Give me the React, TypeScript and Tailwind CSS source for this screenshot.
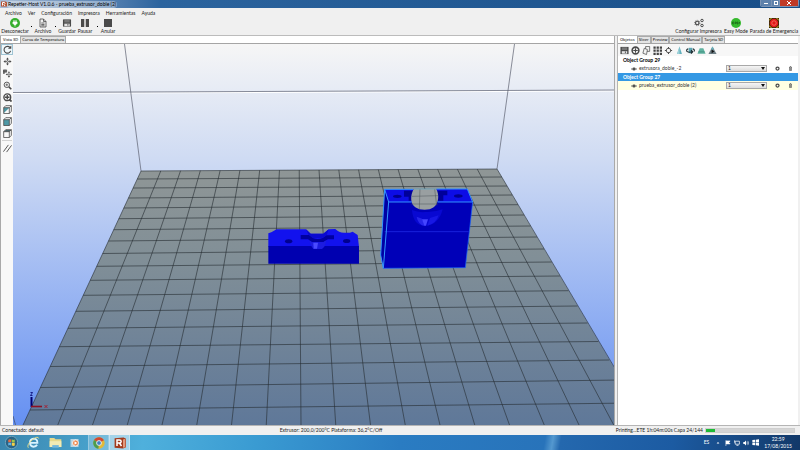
import { useState, type ReactNode } from "react";

const BED_ROWS = [
  [171, 169], [179, 177], [188, 186], [198, 195], [208, 204.7], [218.7, 215], [229.7, 226], [241, 237], [253.5, 249],
  [266.3, 262], [280.3, 276], [295.3, 290.7], [311.3, 306], [328.3, 323], [346.7, 341.5], [366.5, 360], [387.5, 380], [410, 403],
];

const bedLeft = (y: number) => 141 - (y - 171) * 0.4646;
const bedRight = (y: number) => 497 + (y - 169) * 0.588;

function Bed() {
  return (
    <g>
      <path d="M141 171 L497 169 L648 425 L23 425Z" fill="url(#bed)" />
      <g stroke="#252b31" strokeWidth=".6" fill="none">
        {BED_ROWS.map(([l, r]) => (
          <path key={l} d={`M${bedLeft(l)} ${l} L${bedRight(r)} ${r}`} />
        ))}
        {Array.from({ length: 19 }, (_, i) => (
          <path key={i} d={`M${141 + 19.78 * i} ${171 - i * 0.11} L${23 + 34.75 * i} 425`} />
        ))}
      </g>
    </g>
  );
}

function ClampPart() {
  return (
    <g transform="translate(260 180) scale(.3333)">
      <path d="M25 160 L34 157 L50 148 L138 148 L152 161 L190 161 L206 148 L226 147 Q236 158 252 158 L270 158 L278 155 L293 165 L297 200 L25 200Z" fill="#1212ee" />
      <path d="M25 198 H297 V251 H25Z" fill="#0000b0" />
      <path d="M138 148 L152 161 H190 L206 148 L200 166 L186 174 H160 L146 166Z" fill="#0a0ad0" />
      <path d="M122 165 H146 L160 175 Q175 179 188 174 L200 166 H222 V178 H204 L190 186 H156 L144 178 H122Z" fill="#0000a0" />
      <path d="M148 182 L156 187 H190 L200 180 L193 200 L186 207 H160 L154 198Z" fill="#1c1ce0" />
      <path d="M160 188 H174 L171 206 H161Z" fill="#4a4aff" />
      <ellipse cx="86" cy="184" rx="11" ry="6" fill="#000090" />
      <ellipse cx="260" cy="183" rx="11" ry="6" fill="#000090" />
    </g>
  );
}

function BodyPart() {
  return (
    <g transform="translate(260 180) scale(.3333)">
      <path d="M374 28 L388 66 L370 265 L362 225Z" fill="#0000a4" />
      <path d="M374 28 L622 27 L638 66 L386 66Z" fill="#0d0de6" />
      <path d="M386 66 H638 L616 263 L370 265Z" fill="#0000b8" />
      <path d="M432 32 H460 V62 H446 V50 H432Z M526 32 H562 V46 H550 V62 H526Z" fill="#00009a" />
      <path d="M456 90 Q460 137 495 138 Q536 136 548 88 Q520 98 495 96 Q475 98 456 90Z" fill="#0808d2" />
      <path d="M470 110 L486 116 L494 138 Q474 134 470 110Z" fill="#2626ea" />
      <path d="M486 118 H504 L498 137 H493Z" fill="#4545ff" />
      <path d="M510 114 L536 106 Q528 132 502 137Z" fill="#1717e4" />
      <path d="M461 27 C450 48 451 72 466 82 C480 92 508 92 521 82 C536 70 539 46 529 27Z" fill="#999fa1" />
      <path d="M456 49 L534 47 M454 72 H533 M480 27 L478 88 M530 76 L524 27" stroke="#4c555c" strokeWidth="1.5" fill="none" />
      <path d="M461 27 H529" stroke="#62a8c4" strokeWidth="2" />
      <ellipse cx="412" cy="49" rx="13" ry="5" fill="#000090" />
      <ellipse cx="595" cy="48" rx="13" ry="5" fill="#000090" />
      <path d="M374 155 H626" stroke="#2430ee" strokeWidth="2" />
      <g fill="none" stroke="#3296ff" strokeWidth="3">
        <path d="M459 28 H374 L362 225 L370 265 L386 66 H455 M374 28 L386 66 M533 66 H638 L622 27 H530" />
        <path d="M638 66 L616 263 L370 265" strokeWidth="2" stroke="#1666ff" />
      </g>
    </g>
  );
}

function Scene() {
  return (
    <svg className="h-full min-w-0 flex-1" viewBox="13 44 601 381" preserveAspectRatio="xMidYMid slice" role="img" aria-label="Vista 3D">
      <defs>
        <linearGradient id="sky" x2="0" y2="1">
          <stop offset="0" stopColor="#f6f6f6" />
          <stop offset=".3" stopColor="#cfdbf3" />
          <stop offset="1" stopColor="#6590f2" />
        </linearGradient>
        <linearGradient id="bed" x2="0" y2="1">
          <stop offset="0" stopColor="#8f9696" />
          <stop offset=".35" stopColor="#818f97" />
          <stop offset="1" stopColor="#5f7899" />
        </linearGradient>
      </defs>
      <path d="M13 44 H614 V425 H13Z" fill="url(#sky)" />
      <path d="M13 93.5 L614 91" stroke="#fff" />
      <path d="M13 92.5 L614 90 M124.5 44 L141 171 M514.5 44 L497 169" stroke="#5c6070" strokeWidth=".7" />
      <path d="M13 416 L15.5 425" stroke="#35404c" strokeWidth=".6" />
      <Bed />
      <ClampPart />
      <BodyPart />
      <path d="M31.5 407 V397" stroke="#000070" strokeWidth="2" />
      <path d="M31 406.5 H42" stroke="#8e1022" strokeWidth="1.6" />
      <path d="M30.5 392.5 H32.5 L30.5 395.5 H32.5" stroke="#000070" strokeWidth=".8" fill="none" />
      <path d="M44.5 405 L47.5 408 M47.5 405 L44.5 408" stroke="#b01020" strokeWidth=".8" />
    </svg>
  );
}

function Icon({ children, className = "size-[10px]" }: { children: ReactNode; className?: string }) {
  return (
    <svg viewBox="0 0 20 20" className={`shrink-0 ${className}`} fill="none" stroke="#4a4a4a" strokeWidth="2" aria-hidden="true">
      {children}
    </svg>
  );
}

const moveArrows = (
  <>
    <path d="M10 4V16M4 10H16" />
    <path d="M10 0L13.5 5H6.5ZM10 20L13.5 15H6.5ZM0 10L5 6.5V13.5ZM20 10L15 6.5V13.5Z" fill="#4a4a4a" stroke="none" />
    <path d="M8 8H12V12H8Z" fill="#eee" strokeWidth="1" />
  </>
);

const cubeFrame = <path d="M1.5 6H14V19H1.5ZM1.5 6L6 1.5H18.5L14 6M18.5 1.5V14L14 19" strokeWidth="1.8" />;

const VIEW_TOOLS: { name: string; icon: ReactNode }[] = [
  { name: "Rotar", icon: <><path d="M15.5 5.5A7.5 7.5 0 1 0 17 13" strokeWidth="2.4" /><path d="M18.5 1V8.5H11Z" fill="#4a4a4a" stroke="none" /></> },
  { name: "Mover vista", icon: <g transform="translate(1 1) scale(.9)">{moveArrows}</g> },
  { name: "Mover objeto", icon: <><g transform="translate(6 5) scale(.72)">{moveArrows}</g><path d="M1 2H8V7H3V10H1ZM0 5H5" strokeWidth="1.6" fill="#777" /></> },
  { name: "Zoom", icon: <><circle cx="8.5" cy="8.5" r="6" /><path d="M13 13L18.5 18.5" strokeWidth="3.4" /><path d="M5.5 8.5H11.5M8.5 5.5V11.5" strokeWidth="1.6" /></> },
  { name: "Ajustar vista", icon: <><circle cx="9.5" cy="9.5" r="7.5" strokeWidth="3.2" /><path d="M14 14L19 19" strokeWidth="4" /><path d="M9.5 4.5V14.5M4.5 9.5H14.5" strokeWidth="3" /></> },
  { name: "Vista isométrica", icon: <><path d="M2 6H14L2 18Z" fill="#4f99a6" stroke="none" />{cubeFrame}</> },
  { name: "Vista frontal", icon: <><path d="M2 6H14V19H2Z" fill="#4f99a6" stroke="none" />{cubeFrame}</> },
  { name: "Vista superior", icon: <><path d="M2 6L6 2H18L14 6Z" fill="#4f6a70" stroke="none" />{cubeFrame}</> },
];

const floppy = (
  <>
    <path d="M1 2H19V18H1Z" fill="#4a4a4a" stroke="none" />
    <path d="M4 3H16V9H4Z" fill="#777" stroke="none" />
    <path d="M4 11.5H16V17H4Z" fill="#e4e4e4" stroke="none" />
    <path d="M12 12V16" />
  </>
);

const OBJECT_TOOLS: { name: string; icon: ReactNode }[] = [
  { name: "Guardar", icon: floppy },
  { name: "Añadir", icon: <><circle cx="10" cy="10" r="7.5" strokeWidth="3.5" /><path d="M10 5V15M5 10H15" strokeWidth="2.5" /></> },
  { name: "Copiar", icon: <><path d="M8 1H17V12H8Z" fill="#eee" strokeWidth="1.6" /><path d="M5 5L12 8L10 19L2 16Z" fill="#f4f4f4" strokeWidth="1.6" /></> },
  { name: "Auto posición", icon: <path d="M1 1H6V6H1ZM8 1H13V6H8ZM15 1H20V6H15ZM1 8H6V13H1ZM8 8H13V13H8ZM15 8H20V13H15ZM1 15H6V20H1ZM8 15H13V20H8ZM15 15H20V20H15Z" fill="#444" stroke="none" /> },
  { name: "Centrar", icon: <><circle cx="10" cy="10" r="5" /><path d="M10 2V6M10 14V18M2 10H6M14 10H18" strokeWidth="2.4" /></> },
  { name: "Escalar", icon: <><path d="M10 1L15.5 18H4.5Z" fill="#62b0bd" stroke="none" /><path d="M10 1L10 18H4.5Z" fill="#9dd2da" stroke="none" /></> },
  { name: "Girar", icon: <><path d="M6 4H14V16H6Z" fill="#5aa7b4" stroke="none" /><path d="M5 6Q0 8 2 12Q6 15 14 13M15 6Q20 8 18 12M11 9L15 13L11 17" stroke="#1c2a2e" strokeWidth="2.4" /></> },
  { name: "Cortar", icon: <><path d="M6 5H14L19 17H1Z" fill="#5fb2a0" stroke="none" /><path d="M3 13H17" stroke="#3a8878" strokeWidth="1.5" /></> },
  { name: "Analizar", icon: <><path d="M10 1L19 18H1Z" fill="#6c7d84" stroke="none" /><path d="M8 8L14 12L8 16Z" fill="#111" stroke="none" /><path d="M10 1L14 8H6Z" fill="#6ab0ba" stroke="none" /></> },
];

function ToolButton({ label, width, children }: { label: string; width: string; children: ReactNode }) {
  return (
    <button className={`flex h-[16px] flex-col items-center justify-between whitespace-nowrap leading-[6px] ${width}`}>
      {children}
      <span>{label}</span>
    </button>
  );
}

function Dropdown({ label }: { label: string }) {
  return (
    <button aria-label={label} className="flex w-[6px] justify-center pt-[8px]">
      <span className="size-px bg-black" />
    </button>
  );
}

function TitleBar() {
  return (
    <header className="flex h-[8px] shrink-0 items-center bg-linear-to-r from-[#a9bdd6] via-[#2c649e] via-20% to-[#174e88] pl-px">
      <svg viewBox="0 0 12 12" className="size-[6px]" aria-hidden="true">
        <path d="M0 1H9L12 3V11H0Z" fill="#b65231" />
        <path d="M3 9V3H7L8 5L6 7L8 10" stroke="#fff" strokeWidth="2" fill="none" />
      </svg>
      <h1 className="whitespace-nowrap rounded bg-white/35 px-px leading-[7px] text-black">Repetier-Host V1.0.6 - prueba_extrusor_doble (2)</h1>
      <div className="ml-auto mr-px flex h-[7px] self-start overflow-hidden rounded-b-xs border border-t-0 border-[#7c94b4]">
        <button aria-label="Minimizar" className="flex w-[10px] items-end justify-center bg-[#5f82ab] pb-[2px]"><span className="h-px w-[4px] bg-white" /></button>
        <button aria-label="Restaurar" className="flex w-[9px] items-center justify-center border-x border-[#7c94b4] bg-[#5f82ab]"><span className="size-[4px] border border-white" /></button>
        <button aria-label="Cerrar" className="flex w-[18px] items-center justify-center bg-[#c03a27]">
          <svg viewBox="0 0 4 4" className="size-[4px]"><path d="M0 0L4 4M4 0L0 4" stroke="#fff" /></svg>
        </button>
      </div>
    </header>
  );
}

function MainToolbar() {
  return (
    <div className="flex h-[17px] shrink-0 items-start pl-[2px]">
      <ToolButton label="Desconectar" width="w-[26px]">
        <Icon>
          <circle cx="10" cy="10" r="10" fill="#35ae2d" stroke="none" />
          <path d="M6 8H14V11L12 13H8L6 11ZM8 4V8M12 4V8M10 13V17" fill="#fff" stroke="#fff" strokeWidth="1.6" />
        </Icon>
      </ToolButton>
      <Dropdown label="Opciones de conexión" />
      <ToolButton label="Archivo" width="w-[18px]">
        <Icon><path d="M4 2H11L16 7V18H4ZM11 2V7H16M6.5 10H13M6.5 13H13M6.5 15.5H13" strokeWidth="1.6" /></Icon>
      </ToolButton>
      <Dropdown label="Archivos recientes" />
      <ToolButton label="Guardar" width="w-[18px]">
        <Icon><g transform="translate(1 1) scale(.9)">{floppy}</g></Icon>
      </ToolButton>
      <ToolButton label="Pausar" width="w-[18px]">
        <Icon><path d="M2 2H8.5V18H2ZM11.5 2H18V18H11.5Z" fill="#4a4a4a" stroke="none" /></Icon>
      </ToolButton>
      <Dropdown label="Opciones de pausa" />
      <ToolButton label="Anular" width="w-[16px]">
        <Icon><path d="M2 2H18V18H2Z" fill="#4a4a4a" stroke="none" /></Icon>
      </ToolButton>
      <div className="ml-auto flex pr-[2px]">
        <ToolButton label="Configurar Impresora" width="w-[47px]">
          <Icon>
            <circle cx="6.5" cy="10" r="3.5" strokeWidth="2.4" />
            <circle cx="6.5" cy="10" r="5.4" strokeWidth="1.5" strokeDasharray="2 2.2" />
            <circle cx="16" cy="5" r="2.5" />
            <circle cx="16" cy="15" r="2.5" />
          </Icon>
        </ToolButton>
        <ToolButton label="Easy Mode" width="w-[28px]">
          <Icon>
            <circle cx="10" cy="10" r="10" fill="#35b92c" stroke="none" />
            <path d="M3 8H6M3 10H6M3 12H6M3 8V12M8 12V8H10.5V12M8 10.5H10M14 8H12V10H14V12H12M15.5 8L16.5 10L17.5 8M16.5 10V12" stroke="#174d13" strokeWidth="1" />
          </Icon>
        </ToolButton>
        <ToolButton label="Parada de Emergencia" width="w-[48px]">
          <Icon>
            <path d="M0 0H20V20H0Z" fill="#3a2a08" stroke="none" />
            <path d="M0 5L5 0M15 0L20 5M0 15L5 20M15 20L20 15" stroke="#e3b82d" />
            <circle cx="10" cy="10" r="8.5" fill="#e01818" stroke="none" />
            <circle cx="10" cy="10" r="4.5" stroke="#ff7a6a" strokeWidth="1.5" />
          </Icon>
        </ToolButton>
      </div>
    </div>
  );
}

function Tabs({ names }: { names: string[] }) {
  const [active, setActive] = useState(names[0]);
  return (
    <div role="tablist" className="flex h-[8px] shrink-0 items-end border-b border-[#a5a5a5] bg-white font-['Noto_Sans',sans-serif] text-[4px] text-black">
      {names.map((name) => (
        <button
          key={name}
          role="tab"
          aria-selected={active === name}
          onClick={() => setActive(name)}
          className={`h-[7px] whitespace-nowrap leading-[6px] ${active === name ? "bg-white px-[2px]" : "border border-b-0 border-[#aaa] bg-[#e4e4e4] px-px"}`}
        >
          {name}
        </button>
      ))}
    </div>
  );
}

function ObjectRow({ name, selected }: { name: string; selected?: boolean }) {
  return (
    <div className={`flex h-[9px] items-center pl-[13px] pr-[5px] ${selected ? "bg-[#ffffe3]" : ""}`}>
      <Icon className="mr-[2px] size-[6px]">
        <path d="M1 10Q10 1 19 10Q10 19 1 10Z" />
        <circle cx="10" cy="10" r="3" fill="#222" />
      </Icon>
      <span className="flex-1 whitespace-nowrap leading-[7px] text-[#333]">{name}</span>
      <div className="relative h-[7px] w-[41px]">
        <select aria-label={`Extrusor para ${name}`} className="block h-[7px] w-full appearance-none border border-[#a8a8a8] bg-linear-to-b from-[#f5f5f5] to-[#dcdcdc] px-px leading-[5px]">
          <option>1</option>
          <option>2</option>
        </select>
        <svg viewBox="0 0 4 3" className="pointer-events-none absolute right-[2px] top-[2px] h-[3px] w-[4px]" aria-hidden="true"><path d="M0 0H4L2 3Z" fill="#111" /></svg>
      </div>
      <button aria-label="Ajustes" className="ml-[8px]">
        <Icon className="size-[5px]"><circle cx="10" cy="10" r="6" strokeWidth="5" /></Icon>
      </button>
      <button aria-label="Eliminar" className="ml-[8px]">
        <Icon className="size-[5px]"><path d="M4 5H16M6 5V18H14V5M8 2H12M10 7V16" strokeWidth="2.5" /></Icon>
      </button>
    </div>
  );
}

function SidePanel() {
  return (
    <aside className="mr-[2px] flex w-[181px] shrink-0 flex-col border-l border-[#b5b5b5] bg-white">
      <Tabs names={["Objetos", "Slicer", "Preview", "Control Manual", "Tarjeta SD"]} />
      <div className="flex h-[12px] shrink-0 items-center gap-px bg-[#f7f7f7] pl-px">
        {OBJECT_TOOLS.map((tool) => (
          <button key={tool.name} aria-label={tool.name} className="flex h-[11px] w-[10px] items-center justify-center">
            <Icon className="size-[9px]">{tool.icon}</Icon>
          </button>
        ))}
      </div>
      <h2 className="h-[8px] pl-[5px] font-bold leading-[8px] text-black">Object Group 29</h2>
      <ObjectRow name="extrusora_doble_-2" />
      <h2 className="h-[8px] bg-[#3498e4] pl-[5px] font-bold leading-[8px] text-white">Object Group 27</h2>
      <ObjectRow name="prueba_extrusor_doble (2)" selected />
    </aside>
  );
}

function Taskbar() {
  return (
    <footer className="flex h-[15px] shrink-0 items-center bg-[linear-gradient(100deg,#3a86ae_0%,#4fb0dc_18%,#3a9bd2_32%,#2a7cc2_50%,#2873ba_68%,#5498cf_69%,#2468ae_70%,#1c5ba2_84%,#123868_100%)] text-white">
      <nav aria-label="Barra de tareas" className="flex h-full items-center">
        <button aria-label="Inicio" className="flex w-[22px] justify-center">
          <Icon className="size-[13px]">
            <circle cx="10" cy="10" r="9.5" fill="#2b6485" stroke="#8ab8cc" strokeWidth="1" />
            <path d="M5 6Q7 4 9.5 5.5V9.5H5Z" fill="#e9683d" stroke="none" />
            <path d="M10.5 5.5Q13 7 15 5.5V9.5H10.5Z" fill="#9cc84b" stroke="none" />
            <path d="M5 10.5H9.5V14.5Q7 13 5 14.5Z" fill="#60b4e8" stroke="none" />
            <path d="M10.5 10.5H15V14.5Q13 16 10.5 14.5Z" fill="#f6cf46" stroke="none" />
          </Icon>
        </button>
        <button aria-label="Internet Explorer" className="flex w-[22px] justify-center">
          <Icon className="size-[13px]">
            <path d="M5 10.5H16Q16 4 10 4Q4.5 4.5 4.5 10.5Q5 16 10 16.5Q14 16.5 15.5 13.5" stroke="#d8f3ff" strokeWidth="2.8" />
            <path d="M2 18Q-1 14 8 6Q17 -1 18 4" stroke="#e8dc88" strokeWidth="1.5" />
          </Icon>
        </button>
        <button aria-label="Explorador" className="flex w-[22px] justify-center">
          <Icon className="size-[13px]">
            <path d="M1 3H8L10 5H19V17H1Z" fill="#e8d98b" stroke="none" />
            <path d="M1 8H19V17H1Z" fill="#f3ebb4" stroke="none" />
            <path d="M5 14H15V18H5Z" fill="#70b6dd" stroke="none" />
          </Icon>
        </button>
        <button aria-label="Reproductor" className="flex w-[22px] pl-[4px]">
          <Icon className="size-[10px]">
            <path d="M1 2H17V18H1Z" fill="#b8d4e2" stroke="none" />
            <circle cx="11" cy="10" r="6" fill="#e9854a" stroke="#fff" strokeWidth="1.5" />
            <path d="M9 6.5L14.5 10L9 13.5Z" fill="#fff" stroke="none" />
          </Icon>
        </button>
        <button aria-label="Chrome" className="flex h-full w-[21px] items-center justify-center border-x border-[#b0d4e8]/60 bg-white/25">
          <Icon className="size-[12px]">
            <circle cx="10" cy="10" r="9.5" fill="#e3b938" stroke="none" />
            <path d="M10 10L1.8 5A9.5 9.5 0 0 1 18.2 5.3Z" fill="#cf4934" stroke="none" />
            <path d="M10 10L1.8 5A9.5 9.5 0 0 0 9 19.5Z" fill="#4b9d50" stroke="none" />
            <circle cx="10" cy="10" r="4" fill="#3e7fc6" stroke="#f1f1f1" strokeWidth="1.5" />
          </Icon>
        </button>
        <button aria-label="Repetier-Host" className="flex h-full w-[21px] items-center justify-center border-x border-[#cfe6f2]/80 bg-white/50">
          <Icon className="size-[12px]">
            <path d="M1 2L16 1L20 3V17L15 19L1 18Z" fill="#a33a1d" stroke="none" />
            <path d="M15 4L19 3V17L15 18Z" fill="#e09a7d" stroke="none" />
            <path d="M5 15V5H9Q12 5 12 7.5Q12 10 9 10H5M9 10L12.5 15" stroke="#fff" strokeWidth="2.5" />
          </Icon>
        </button>
      </nav>
      <div className="ml-auto flex items-center pr-[8px]">
        <span className="mr-[7px]">ES</span>
        <Icon className="mr-[5px] size-[4px]"><path d="M3 13L10 5L17 13Z" fill="#fff" stroke="none" /></Icon>
        <Icon className="mr-[3px] size-[6px]"><path d="M3 1V20M3 3H17L13 8L17 13H3" fill="#fff" stroke="#fff" /></Icon>
        <Icon className="mr-[3px] size-[6px]"><path d="M4 4H18V14H4ZM8 18H15M2 1V9" stroke="#fff" strokeWidth="2.5" /></Icon>
        <Icon className="mr-[3px] size-[6px]"><path d="M1 7H5L10 2V18L5 13H1Z" fill="#fff" stroke="none" /><path d="M13 6Q16 10 13 14M16 3Q21 10 16 17" stroke="#fff" /></Icon>
        <Icon className="mr-[5px] size-[7px]"><path d="M1 3L9 2V9H1ZM11 2L20 1V9H11ZM1 11H9V18L1 17ZM11 11H20V19L11 18Z" fill="#fff" stroke="none" /></Icon>
        <time className="text-center leading-[7px]">22:59<br />17/08/2015</time>
      </div>
    </footer>
  );
}

export default function App() {
  const [tool, setTool] = useState("Rotar");

  return (
    <div className="flex h-screen flex-col overflow-hidden bg-[#f0f0f0] font-['Lato',sans-serif] text-[5px] text-[#222]">
      <TitleBar />
      <nav aria-label="Menú" className="flex h-[10px] shrink-0 items-center gap-[6px] pl-[5px]">
        {["Archivo", "Ver", "Configuración", "Impresora", "Herramientas", "Ayuda"].map((item) => (
          <button key={item} className="leading-[7px]">{item}</button>
        ))}
      </nav>
      <MainToolbar />
      <main className="flex min-h-0 flex-1 gap-[2px] border-t border-[#bcbcbc]">
        <section className="flex min-w-0 flex-1 flex-col border-x border-[#a9a9a9] bg-white">
          <Tabs names={["Vista 3D", "Curva de Temperatura"]} />
          <div className="flex min-h-0 flex-1">
            <div className="flex w-[12px] shrink-0 flex-col items-center gap-px bg-[#f8f8f8]">
              {VIEW_TOOLS.map(({ name, icon }) => (
                <button
                  key={name}
                  aria-label={name}
                  aria-pressed={tool === name}
                  onClick={() => setTool(name)}
                  className={`flex h-[11px] w-[12px] items-center justify-center ${tool === name ? "border border-[#9fc4d4] bg-[#f0f8fb]" : ""}`}
                >
                  <Icon className="size-[9px]">{icon}</Icon>
                </button>
              ))}
              <span className="h-px w-[10px] bg-[#d2d2d2]" />
              <button aria-label="Proyección paralela" className="flex h-[12px] w-[12px] items-center justify-center">
                <Icon className="size-[9px]"><path d="M1 17L12 2M8 18L19 3" /></Icon>
              </button>
            </div>
            <Scene />
          </div>
        </section>
        <SidePanel />
      </main>
      <div className="grid h-[10px] shrink-0 grid-cols-[1fr_auto_1fr] items-center border-t border-[#b5b5b5] px-[2px]">
        <span>Conectado: default</span>
        <span className="pr-[138px]">Extrusor: 200,0/200°C Plataforma: 36,2°C/Off</span>
        <div className="flex items-center justify-end gap-[2px] pr-[3px]">
          <span className="whitespace-nowrap">Printing...ETE 1h:04m:00s Capa 24/144</span>
          <div role="progressbar" aria-label="Progreso" aria-valuenow={10} className="h-[5px] w-[90px] border border-[#cfcfcf] bg-[#d4d4d4]">
            <div className="h-full w-[10%] bg-[#1fba35]" />
          </div>
        </div>
      </div>
      <Taskbar />
    </div>
  );
}
